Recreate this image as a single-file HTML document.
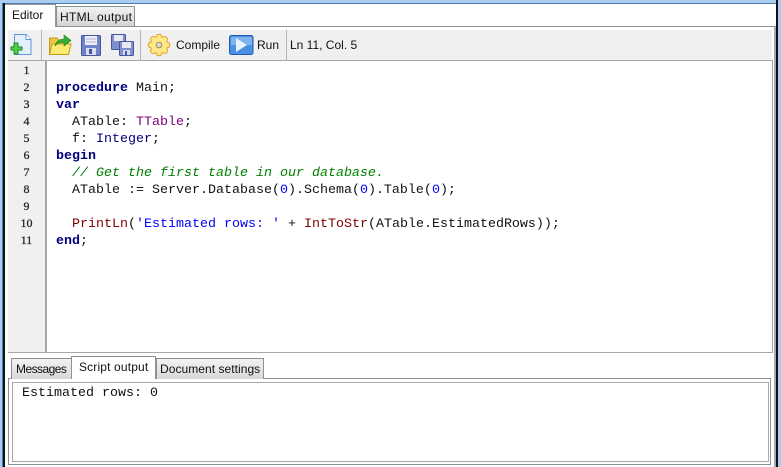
<!DOCTYPE html>
<html><head><meta charset="utf-8"><style>
html,body{margin:0;padding:0;width:781px;height:467px;overflow:hidden;background:#fff}
div{position:absolute;box-sizing:border-box}
svg{position:absolute}
.t{font:12px/14px "Liberation Sans",sans-serif;color:#111;white-space:nowrap}
.c{font:13.33px/17px "Liberation Mono",monospace;color:#111;white-space:pre;position:absolute;left:56px}
.n{font:12px/17px "Liberation Serif",serif;color:#222;position:absolute;left:8px;width:37px;text-align:center;-webkit-text-stroke:.25px #222}
b{color:#000080}i{color:#008000}.p{color:#800080}.y{color:#000080}.m{color:#800000}.s{color:#0000ff}
</style></head><body>
<div style="left:0;top:0;width:781px;height:3px;background:#a9cdf0"></div>
<div style="left:0;top:3px;width:781px;height:1px;background:#4a7db0"></div>
<div style="left:0;top:3px;width:2px;height:464px;background:#a9cdf0"></div>
<div style="left:2px;top:3px;width:1px;height:464px;background:#4a7db0"></div>
<div style="left:3px;top:3px;width:2px;height:464px;background:#111"></div>
<div style="left:778px;top:0;width:3px;height:467px;background:#a9cdf0"></div>
<div style="left:776px;top:0;width:2px;height:467px;background:#111"></div>
<div style="left:774px;top:26px;width:2px;height:441px;background:#a9a9b0"></div>

<div style="left:55px;top:26px;width:720px;height:1px;background:#8f8f96"></div>
<!-- tabs -->
<div style="left:5px;top:4px;width:51px;height:23px;background:#fff;border:1px solid #999;border-bottom:none;border-left:none"></div>
<div class="t" style="left:12px;top:8px">Editor</div>
<div style="left:56px;top:6px;width:79px;height:20px;background:linear-gradient(#f2f2f2,#d4d4d4);border:1px solid #8f8f96;border-bottom:none"></div>
<div class="t" style="left:60px;top:10px;letter-spacing:.3px">HTML output</div>

<!-- toolbar -->
<div style="left:8px;top:30px;width:764px;height:30px;background:#f0f0f0"></div>
<div style="left:41px;top:30px;width:1px;height:30px;background:#b5b5b5"></div>
<div style="left:140px;top:30px;width:1px;height:30px;background:#b5b5b5"></div>
<div style="left:286px;top:30px;width:1px;height:30px;background:#b5b5b5"></div>

<svg style="left:10px;top:33px" width="24" height="24" viewBox="0 0 24 24">
<path d="M4.500 1.500H16L21 6.500V21.500H4.500Z" fill="#e2effc" stroke="#5f97d8"/><path d="M16 1.500V6.500H21" fill="#fff" stroke="#5f97d8"/>
<path d="M4 10H8V14H12V17H8V21H4V17H1V14H4Z" fill="#4fd04f" stroke="#1d8a1d"/></svg>
<svg style="left:48px;top:33px" width="24" height="24" viewBox="0 0 24 24">
<path d="M1.500 5H9L11 7H20V21H1.500Z" fill="#f0c840" stroke="#c49a1e"/><path d="M4 11H23L20.500 21.500H1.500Z" fill="#fdea70" stroke="#c49a1e"/>
<path d="M7 13C8 8 12 6 16 6V2L23 7.500L16 13V9.500C12 9.500 9 10 7 13Z" fill="#35b035" stroke="#1d7d1d" stroke-width=".6"/></svg>
<svg style="left:80px;top:33px" width="22" height="24" viewBox="0 0 22 24">
<rect x="1.500" y="2.500" width="19" height="20" rx="1" fill="#6f80cc" stroke="#46569e"/>
<rect x="5" y="3" width="12" height="9" fill="#eeeef6"/><path d="M6 6H16M6 9H16" stroke="#a9b0d6"/>
<rect x="6" y="15" width="10" height="7" fill="#d8dcef"/><rect x="9" y="16" width="3" height="5" fill="#46569e"/></svg>
<svg style="left:110px;top:33px" width="25" height="24" viewBox="0 0 25 24">
<rect x="1.500" y="1.500" width="14" height="15" rx="1" fill="#7f8fd0" stroke="#46569e"/><rect x="4" y="2" width="9" height="6" fill="#e8e8f2"/>
<rect x="9.500" y="8.500" width="14" height="14" rx="1" fill="#7f8fd0" stroke="#46569e"/><rect x="12" y="9" width="9" height="6" fill="#e8e8f2"/>
<rect x="13" y="17" width="7" height="5" fill="#d8dcef"/><rect x="15" y="18" width="2" height="4" fill="#46569e"/></svg>
<svg style="left:147px;top:33px" width="24" height="24" viewBox="0 0 24 24">
<g fill="#fde88a" stroke="#e0a020"><circle cx="12" cy="4" r="2.800"/><circle cx="12" cy="20" r="2.800"/><circle cx="4" cy="12" r="2.800"/><circle cx="20" cy="12" r="2.800"/><circle cx="6.300" cy="6.300" r="2.800"/><circle cx="17.700" cy="6.300" r="2.800"/><circle cx="6.300" cy="17.700" r="2.800"/><circle cx="17.700" cy="17.700" r="2.800"/></g>
<circle cx="12" cy="12" r="8" fill="#fde88a"/>
<circle cx="12" cy="12" r="2.800" fill="#d8d8d8" stroke="#a09050"/></svg>
<div class="t" style="left:176px;top:38px">Compile</div>
<svg style="left:229px;top:35px" width="25" height="20" viewBox="0 0 25 20">
<rect x=".5" y=".5" width="23.500" height="19" rx="2" fill="#4a90e0" stroke="#2458b0"/><rect x="2" y="2" width="21" height="8" fill="#7db4ee"/>
<path d="M7 3L18 10L7 17Z" fill="#e6f2fd"/></svg>
<div class="t" style="left:257px;top:38px">Run</div>
<div class="t" style="left:290px;top:38px">Ln 11, Col. 5</div>

<!-- editor -->
<div style="left:8px;top:60px;width:765px;height:293px;background:#fff;border:1px solid #a8a8a8;border-left:none"></div>
<div style="left:8px;top:61px;width:37px;height:291px;background:#f0f0f0"></div>
<div style="left:45px;top:60px;width:2px;height:293px;background:#a8a8a8"></div>

<span class="n" style="top:62px">1</span><span class="n" style="top:79px">2</span><span class="n" style="top:96px">3</span><span class="n" style="top:113px">4</span><span class="n" style="top:130px">5</span><span class="n" style="top:147px">6</span><span class="n" style="top:164px">7</span><span class="n" style="top:181px">8</span><span class="n" style="top:198px">9</span><span class="n" style="top:215px">10</span><span class="n" style="top:232px">11</span>

<span class="c" style="top:80px"><b>procedure</b> Main;</span>
<span class="c" style="top:97px"><b>var</b></span>
<span class="c" style="top:114px">  ATable: <span class="p">TTable</span>;</span>
<span class="c" style="top:131px">  f: <span class="y">Integer</span>;</span>
<span class="c" style="top:148px"><b>begin</b></span>
<span class="c" style="top:165px">  <i>// Get the first table in our database.</i></span>
<span class="c" style="top:182px">  ATable := Server.Database(<span class="s">0</span>).Schema(<span class="s">0</span>).Table(<span class="s">0</span>);</span>
<span class="c" style="top:216px">  <span class="m">PrintLn</span>(<span class="s">'Estimated rows: '</span> + <span class="m">IntToStr</span>(ATable.EstimatedRows));</span>
<span class="c" style="top:233px"><b>end</b>;</span>

<!-- bottom -->
<div style="left:8px;top:378px;width:763px;height:87px;border:1px solid #8f8f96"></div>
<div style="left:12px;top:382px;width:757px;height:80px;border:1px solid #a8a8a8"></div>
<div style="left:11px;top:358px;width:61px;height:21px;background:linear-gradient(#f2f2f2,#d8d8d8);border:1px solid #8f8f96;border-bottom:none"></div>
<div class="t" style="left:16px;top:362px;letter-spacing:-.55px">Messages</div>
<div style="left:156px;top:358px;width:108px;height:21px;background:linear-gradient(#f2f2f2,#d8d8d8);border:1px solid #8f8f96;border-bottom:none"></div>
<div class="t" style="left:160px;top:362px;letter-spacing:.05px">Document settings</div>
<div style="left:71px;top:356px;width:85px;height:23px;background:#fff;border:1px solid #8f8f96;border-bottom:none"></div>
<div class="t" style="left:79px;top:360px;letter-spacing:.15px">Script output</div>
<span class="c" style="left:22px;top:385px">Estimated rows: 0</span>
</body></html>
